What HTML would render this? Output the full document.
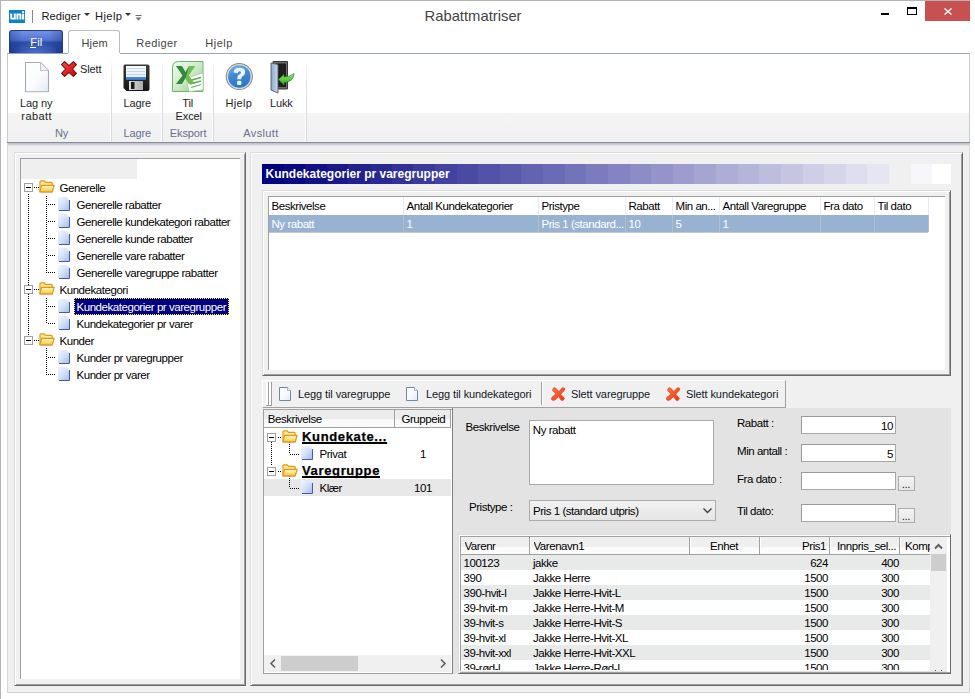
<!DOCTYPE html><html><head><meta charset="utf-8"><style>
*{margin:0;padding:0;box-sizing:border-box}
html,body{width:975px;height:699px;overflow:hidden;background:#fff;font-family:"Liberation Sans", sans-serif}
.a{position:absolute}
.t{position:absolute;white-space:nowrap;line-height:1;color:#000}
svg{position:absolute;overflow:visible}
</style></head><body>
<div class="a" style="left:0px;top:0px;width:970px;height:1px;background:#b5b5b5"></div>
<div class="a" style="left:0px;top:0px;width:1px;height:699px;background:#b5b5b5"></div>
<div class="a" style="left:9px;top:10px;width:16px;height:13px;background:#0a84c8"></div>
<svg style="left:9px;top:10px" width="16" height="13" viewBox="0 0 16 13"><g fill="#fff"><path d="M1.2 3.6h2v3.7q0 0.8 0.8 0.8t0.8-0.8V3.6h2v5.9H2.7Q1.2 9.5 1.2 8z"/><path d="M7.4 9.5V3.6h3.6q1.4 0 1.4 1.4v4.5h-2V5.8q0-0.5-0.5-0.5h-0.5v4.2z"/><rect x="13.1" y="3.6" width="2" height="5.9"/><rect x="13.1" y="1.2" width="2" height="1.7"/></g></svg>
<div class="a" style="left:32px;top:10px;width:1px;height:13px;background:#8a8a8a"></div>
<div class="t" style="left:41.5px;top:11px;font-size:11.2px;color:#1a1a1a">Rediger</div>
<svg style="left:84px;top:13px" width="6" height="3"><path d="M0 0h6L3 3z" fill="#333"/></svg>
<div class="t" style="left:95px;top:11px;font-size:11.2px;color:#1a1a1a;letter-spacing:0.4px">Hjelp</div>
<svg style="left:125px;top:13px" width="6" height="3"><path d="M0 0h6L3 3z" fill="#333"/></svg>
<svg style="left:135px;top:15px" width="7" height="6"><path d="M0.5 0.5h6" stroke="#6a6a6a" stroke-width="1"/><path d="M0.5 2.5h6L3.5 5.5z" fill="#6a6a6a"/></svg>
<div class="t" style="left:424.5px;top:9px;font-size:14.8px;color:#444">Rabattmatriser</div>
<div class="a" style="left:881px;top:13px;width:8px;height:2px;background:#000"></div>
<div class="a" style="left:907px;top:7px;width:10px;height:8px;border:1px solid #000;border-top-width:2px"></div>
<div class="a" style="left:925px;top:1px;width:45px;height:20px;background:#c75050"></div>
<svg style="left:944px;top:8px" width="8" height="7"><path d="M0.5 0.5L7.5 6.5M7.5 0.5L0.5 6.5" stroke="#fff" stroke-width="1.4"/></svg>
<div class="a" style="left:9px;top:30px;width:54px;height:24px;border-radius:3px 3px 0 0;background:radial-gradient(ellipse 45% 60% at 50% 100%,rgba(110,150,235,0.55),rgba(110,150,235,0) 100%),linear-gradient(to right,rgba(20,40,120,0.35),rgba(0,0,0,0) 25%,rgba(0,0,0,0) 75%,rgba(20,40,120,0.35)),linear-gradient(#7193e6,#5274d0 40%,#2b4ca6 50%,#25469e);border:1px solid #1f3a8a;border-bottom:none"></div>
<div class="t" style="left:30.3px;top:37px;font-size:11px;color:#fff;letter-spacing:0.2px">Fil</div>
<div class="a" style="left:30px;top:47px;width:6px;height:1px;background:#fff"></div>
<div class="a" style="left:68px;top:30px;width:52px;height:24px;border-radius:3px 3px 0 0;background:#fff;border:1px solid #b9bcc0;border-bottom:none"></div>
<div class="t" style="left:81.5px;top:38px;font-size:11px;letter-spacing:-0.1px;color:#1e1e1e;color:#444;letter-spacing:0.15px">Hjem</div>
<div class="t" style="left:136.3px;top:38px;font-size:11px;letter-spacing:-0.1px;color:#1e1e1e;color:#444;letter-spacing:0.4px">Rediger</div>
<div class="t" style="left:205.3px;top:38px;font-size:11px;letter-spacing:-0.1px;color:#1e1e1e;color:#444;letter-spacing:0.5px">Hjelp</div>
<div class="a" style="left:7px;top:53px;width:963px;height:90px;background:#fff;border:1px solid #c5cbd2;border-bottom:none;border-top-color:#9aa6b2"></div>
<div class="a" style="left:68px;top:53px;width:52px;height:1px;background:#fff"></div>
<div class="a" style="left:8px;top:113px;width:961px;height:29px;background:linear-gradient(#f4f4f4,#f0f0f0)"></div>
<div class="a" style="left:7px;top:142px;width:963px;height:1px;background:#878c96"></div>
<div class="a" style="left:7px;top:143px;width:963px;height:3px;background:linear-gradient(#b9bfc9,#cfd3da 60%,#eceef0)"></div>
<div class="a" style="left:111px;top:58px;width:1px;height:84px;background:linear-gradient(#fff,#dde1e5 30%,#d5d9dd)"></div>
<div class="a" style="left:110px;top:113px;width:1px;height:29px;background:#fff"></div>
<div class="a" style="left:162px;top:58px;width:1px;height:84px;background:linear-gradient(#fff,#dde1e5 30%,#d5d9dd)"></div>
<div class="a" style="left:161px;top:113px;width:1px;height:29px;background:#fff"></div>
<div class="a" style="left:213px;top:58px;width:1px;height:84px;background:linear-gradient(#fff,#dde1e5 30%,#d5d9dd)"></div>
<div class="a" style="left:212px;top:113px;width:1px;height:29px;background:#fff"></div>
<div class="a" style="left:306px;top:58px;width:1px;height:84px;background:linear-gradient(#fff,#dde1e5 30%,#d5d9dd)"></div>
<div class="a" style="left:305px;top:113px;width:1px;height:29px;background:#fff"></div>
<div class="t" style="left:20px;top:98px;font-size:11px;letter-spacing:-0.1px;color:#1e1e1e;">Lag ny</div>
<div class="t" style="left:21.3px;top:111px;font-size:11px;letter-spacing:-0.1px;color:#1e1e1e;letter-spacing:0.45px">rabatt</div>
<div class="t" style="left:80px;top:64px;font-size:11px;letter-spacing:-0.1px;color:#1e1e1e;">Slett</div>
<div class="t" style="left:123.5px;top:98px;font-size:11px;letter-spacing:-0.1px;color:#1e1e1e;">Lagre</div>
<div class="t" style="left:182.3px;top:98px;font-size:11px;letter-spacing:-0.1px;color:#1e1e1e;">Til</div>
<div class="t" style="left:175.5px;top:111px;font-size:11px;letter-spacing:-0.1px;color:#1e1e1e;">Excel</div>
<div class="t" style="left:225.4px;top:98px;font-size:11px;letter-spacing:-0.1px;color:#1e1e1e;letter-spacing:0.35px">Hjelp</div>
<div class="t" style="left:269.9px;top:98px;font-size:11px;letter-spacing:-0.1px;color:#1e1e1e;">Lukk</div>
<div class="t" style="left:55px;top:128px;font-size:11px;letter-spacing:-0.1px;color:#1e1e1e;color:#66708a;">Ny</div>
<div class="t" style="left:123.5px;top:128px;font-size:11px;letter-spacing:-0.1px;color:#1e1e1e;color:#66708a;">Lagre</div>
<div class="t" style="left:169.8px;top:128px;font-size:11px;letter-spacing:-0.1px;color:#1e1e1e;color:#66708a;">Eksport</div>
<div class="t" style="left:243.3px;top:128px;font-size:11px;letter-spacing:-0.1px;color:#1e1e1e;color:#66708a;letter-spacing:0.35px;">Avslutt</div>
<svg style="left:24px;top:61px" width="26" height="32" viewBox="0 0 26 32">
<defs><linearGradient id="dg" x1="0" y1="0" x2="1" y2="1"><stop offset="0" stop-color="#fff"/><stop offset="0.55" stop-color="#fafcfe"/><stop offset="1" stop-color="#e2eaf4"/></linearGradient></defs>
<path d="M1.5 1.5H16.5L24.5 9.5V30.5H1.5Z" fill="url(#dg)" stroke="#a4aab2" stroke-width="1.1"/>
<path d="M16.5 1.5V9.5H24.5Z" fill="#eef3f8" stroke="#b4bac0" stroke-width="0.8"/>
<path d="M2.5 30.8H24" stroke="#c8ccd0" stroke-width="0.8"/>
</svg>
<svg style="left:61px;top:61px" width="16" height="16" viewBox="0 0 16 16">
<defs><linearGradient id="xg" x1="0" y1="0" x2="1" y2="1"><stop offset="0" stop-color="#d86060"/><stop offset="0.45" stop-color="#e82828"/><stop offset="1" stop-color="#b80a0a"/></linearGradient></defs>
<path d="M0.6 3.6L3.6 0.6L8 4.6L12.4 0.6L15.4 3.6L11.4 8L15.4 12.4L12.4 15.4L8 11.4L3.6 15.4L0.6 12.4L4.6 8Z" fill="url(#xg)" stroke="#7a0a0a" stroke-width="1.1" stroke-linejoin="round"/>
</svg>
<svg style="left:123px;top:64px" width="27" height="28" viewBox="0 0 27 28">
<defs><linearGradient id="fb" x1="0" y1="0" x2="0" y2="1"><stop offset="0" stop-color="#3a3a3a"/><stop offset="1" stop-color="#151515"/></linearGradient>
<linearGradient id="fl" x1="0" y1="0" x2="0" y2="1"><stop offset="0" stop-color="#f8fbff"/><stop offset="0.75" stop-color="#e8f0fa"/><stop offset="0.8" stop-color="#4a90e0"/><stop offset="1" stop-color="#2a70c8"/></linearGradient>
<linearGradient id="fs" x1="0" y1="0" x2="1" y2="0"><stop offset="0" stop-color="#e0e0e0"/><stop offset="1" stop-color="#a8a8a8"/></linearGradient></defs>
<path d="M2 0.5H24.5Q26.5 0.5 26.5 2.5V25Q26.5 27 24.5 27H3.5L0.5 24V2Q0.5 0.5 2 0.5Z" fill="url(#fb)"/>
<rect x="3" y="2" width="20" height="14" fill="url(#fl)"/>
<path d="M4 4.5H22M4 7.5H22M4 10.5H22" stroke="#b8cfe8" stroke-width="0.8"/>
<rect x="6" y="17" width="14" height="9" fill="url(#fs)"/>
<rect x="8" y="18" width="3.5" height="7" fill="#1a1a1a"/>
</svg>
<svg style="left:172px;top:61px" width="32" height="31" viewBox="0 0 32 31">
<defs><linearGradient id="eg" x1="0" y1="0" x2="1" y2="1"><stop offset="0" stop-color="#f4fbf2"/><stop offset="0.5" stop-color="#cfe9c8"/><stop offset="1" stop-color="#8ccc84"/></linearGradient></defs>
<path d="M0.5 6.5Q0.5 0.5 6.5 0.5H31V30.5H0.5Z" fill="url(#eg)" stroke="#6ab86a"/>
<path d="M14 17L31 12V29L17 30.5Z" fill="#fff" stroke="#9ccc9c" stroke-width="0.8"/>
<path d="M18 19.5L29 16.5M18 23L29 20M19 26.5L29 23.5" stroke="#5cae5c" stroke-width="1.3"/>
<path d="M4 5H10L13.5 11L17 5H23L16.5 14.5L23 23H17L13.5 17L10 23H4L10.5 14.5Z" fill="#2e8b3e"/>
<path d="M17 5H23L16.5 14.5L23 23H17L13.5 17Z" fill="#7cc44c" opacity="0.85"/>
</svg>
<svg style="left:225px;top:62px" width="29" height="29" viewBox="0 0 29 29">
<defs><linearGradient id="hg" x1="0" y1="0" x2="0.3" y2="1"><stop offset="0" stop-color="#78b4e8"/><stop offset="0.5" stop-color="#3f8ad4"/><stop offset="1" stop-color="#2a78c8"/></linearGradient></defs>
<circle cx="14.3" cy="14.5" r="13.6" fill="#8a8a8a"/>
<circle cx="14.3" cy="14.5" r="12.6" fill="#d8d8d8"/>
<circle cx="14.3" cy="14.5" r="11.2" fill="url(#hg)"/>
<path d="M8.6 10.6Q8.6 5.8 14.4 5.8Q20.2 5.8 20.2 10.2Q20.2 12.8 17.4 14.3Q16.3 15 16.3 17.2H12.2Q12 13.8 14.6 12.3Q16 11.5 16 10.4Q16 9.2 14.4 9.2Q12.8 9.2 12.8 11.2Z" fill="#eef2f6"/>
<rect x="12.1" y="18.8" width="4.3" height="4.2" rx="1.3" fill="#eef2f6"/>
</svg>
<svg style="left:270px;top:61px" width="25" height="33" viewBox="0 0 25 33">
<defs><linearGradient id="dl" x1="0" y1="0" x2="1" y2="0"><stop offset="0" stop-color="#8aa8c8"/><stop offset="1" stop-color="#c8dcf0"/></linearGradient>
<linearGradient id="ga" x1="0" y1="0" x2="0" y2="1"><stop offset="0" stop-color="#8ee86a"/><stop offset="1" stop-color="#2fae22"/></linearGradient></defs>
<path d="M3 0.5H17.5V28H3Z" fill="#6a6a6a" stroke="#3a3a3a"/>
<path d="M6 2.5H16V26H6Z" fill="#1e1e1e"/>
<path d="M1 2L8 3.5V32L1 29Z" fill="url(#dl)" stroke="#505860" stroke-width="0.9"/>
<path d="M8.5 18.5L14 13.5V16Q20 16 24 12.5Q23.5 21 14 21.5V24Z" fill="url(#ga)" stroke="#2a8a1a" stroke-width="0.7"/>
</svg>
<div class="a" style="left:7px;top:146px;width:963px;height:546px;background:#f0f0f0"></div>
<div class="a" style="left:7px;top:143px;width:1px;height:550px;background:#d6d6d6"></div>
<div class="a" style="left:969px;top:143px;width:1px;height:550px;background:#d6d6d6"></div>
<div class="a" style="left:7px;top:692px;width:963px;height:1px;background:#d6d6d6"></div>
<div class="a" style="left:14px;top:152px;width:232px;height:534px;border-top:1px solid #dcdcdc;border-left:1px solid #dcdcdc;border-right:1px solid #696969;border-bottom:1px solid #696969;box-shadow:inset 1px 1px 0 #fff, inset -1px -1px 0 #a0a0a0"></div>
<div class="a" style="left:20px;top:158px;width:220px;height:521px;background:#fff;border-top:1px solid #a0a0a0;border-left:1px solid #a0a0a0"></div>
<div class="a" style="left:21px;top:159px;width:116px;height:20px;background:#efefef"></div>
<div class="a" style="left:28px;top:194px;width:1px;height:145px;background:repeating-linear-gradient(to bottom,#000 0 1px,transparent 1px 2px)"></div>
<div class="a" style="left:46px;top:196px;width:1px;height:77px;background:repeating-linear-gradient(to bottom,#000 0 1px,transparent 1px 2px)"></div>
<div class="a" style="left:46px;top:298px;width:1px;height:26px;background:repeating-linear-gradient(to bottom,#000 0 1px,transparent 1px 2px)"></div>
<div class="a" style="left:46px;top:348px;width:1px;height:27px;background:repeating-linear-gradient(to bottom,#000 0 1px,transparent 1px 2px)"></div>
<div class="a" style="left:34px;top:187px;width:5px;height:1px;background:repeating-linear-gradient(to right,#000 0 1px,transparent 1px 2px)"></div>
<div class="a" style="left:24px;top:183px;width:9px;height:9px;border:1px solid #a0a0a0;background:#fff"><div class="a" style="left:1px;top:3px;width:5px;height:1px;background:#000"></div></div>
<svg style="left:39px;top:180px" width="16" height="14" viewBox="0 0 16 14">
<defs><linearGradient id="fg0" x1="0" y1="0" x2="0" y2="1"><stop offset="0" stop-color="#fffbd0"/><stop offset="0.5" stop-color="#fbe27a"/><stop offset="1" stop-color="#f4c44a"/></linearGradient></defs>
<path d="M1.3 12.6H13.6" stroke="#9a9a9a" stroke-opacity="0.5"/>
<path d="M1 11.5V1.8Q1 0.8 2 0.8H5.2L6.6 2.3H12.2Q13.2 2.3 13.2 3.3V5.5" fill="#fde894" stroke="#e39a18" stroke-width="1.2"/>
<path d="M2.6 5.4H15.2L13.2 11.8H0.8Z" fill="url(#fg0)" stroke="#e3951a" stroke-width="1.2" stroke-linejoin="round"/>
</svg>
<div class="t" style="left:59.5px;top:183px;font-size:11.5px;letter-spacing:-0.45px;">Generelle</div>
<div class="a" style="left:48px;top:204px;width:8px;height:1px;background:repeating-linear-gradient(to right,#000 0 1px,transparent 1px 2px)"></div>
<svg style="left:58px;top:197px" width="12" height="14" viewBox="0 0 12 14">
<defs><linearGradient id="dc1" x1="0" y1="0" x2="1" y2="1"><stop offset="0" stop-color="#f2f6fe"/><stop offset="0.5" stop-color="#d4e2f8"/><stop offset="1" stop-color="#a6bcec"/></linearGradient></defs>
<path d="M0 0H8.5L11 2.5V13H0Z" fill="url(#dc1)"/>
<path d="M11.5 3V13.5H1" stroke="#4a5aa8" stroke-width="1" fill="none"/>
<path d="M8.5 0V2.5H11Z" fill="#e8eefa"/>
</svg>
<div class="t" style="left:76.5px;top:200px;font-size:11.5px;letter-spacing:-0.45px;">Generelle rabatter</div>
<div class="a" style="left:48px;top:221px;width:8px;height:1px;background:repeating-linear-gradient(to right,#000 0 1px,transparent 1px 2px)"></div>
<svg style="left:58px;top:214px" width="12" height="14" viewBox="0 0 12 14">
<defs><linearGradient id="dc2" x1="0" y1="0" x2="1" y2="1"><stop offset="0" stop-color="#f2f6fe"/><stop offset="0.5" stop-color="#d4e2f8"/><stop offset="1" stop-color="#a6bcec"/></linearGradient></defs>
<path d="M0 0H8.5L11 2.5V13H0Z" fill="url(#dc2)"/>
<path d="M11.5 3V13.5H1" stroke="#4a5aa8" stroke-width="1" fill="none"/>
<path d="M8.5 0V2.5H11Z" fill="#e8eefa"/>
</svg>
<div class="t" style="left:76.5px;top:217px;font-size:11.5px;letter-spacing:-0.45px;">Generelle kundekategori rabatter</div>
<div class="a" style="left:48px;top:238px;width:8px;height:1px;background:repeating-linear-gradient(to right,#000 0 1px,transparent 1px 2px)"></div>
<svg style="left:58px;top:231px" width="12" height="14" viewBox="0 0 12 14">
<defs><linearGradient id="dc3" x1="0" y1="0" x2="1" y2="1"><stop offset="0" stop-color="#f2f6fe"/><stop offset="0.5" stop-color="#d4e2f8"/><stop offset="1" stop-color="#a6bcec"/></linearGradient></defs>
<path d="M0 0H8.5L11 2.5V13H0Z" fill="url(#dc3)"/>
<path d="M11.5 3V13.5H1" stroke="#4a5aa8" stroke-width="1" fill="none"/>
<path d="M8.5 0V2.5H11Z" fill="#e8eefa"/>
</svg>
<div class="t" style="left:76.5px;top:234px;font-size:11.5px;letter-spacing:-0.45px;">Generelle kunde rabatter</div>
<div class="a" style="left:48px;top:255px;width:8px;height:1px;background:repeating-linear-gradient(to right,#000 0 1px,transparent 1px 2px)"></div>
<svg style="left:58px;top:248px" width="12" height="14" viewBox="0 0 12 14">
<defs><linearGradient id="dc4" x1="0" y1="0" x2="1" y2="1"><stop offset="0" stop-color="#f2f6fe"/><stop offset="0.5" stop-color="#d4e2f8"/><stop offset="1" stop-color="#a6bcec"/></linearGradient></defs>
<path d="M0 0H8.5L11 2.5V13H0Z" fill="url(#dc4)"/>
<path d="M11.5 3V13.5H1" stroke="#4a5aa8" stroke-width="1" fill="none"/>
<path d="M8.5 0V2.5H11Z" fill="#e8eefa"/>
</svg>
<div class="t" style="left:76.5px;top:251px;font-size:11.5px;letter-spacing:-0.45px;">Generelle vare rabatter</div>
<div class="a" style="left:48px;top:272px;width:8px;height:1px;background:repeating-linear-gradient(to right,#000 0 1px,transparent 1px 2px)"></div>
<svg style="left:58px;top:265px" width="12" height="14" viewBox="0 0 12 14">
<defs><linearGradient id="dc5" x1="0" y1="0" x2="1" y2="1"><stop offset="0" stop-color="#f2f6fe"/><stop offset="0.5" stop-color="#d4e2f8"/><stop offset="1" stop-color="#a6bcec"/></linearGradient></defs>
<path d="M0 0H8.5L11 2.5V13H0Z" fill="url(#dc5)"/>
<path d="M11.5 3V13.5H1" stroke="#4a5aa8" stroke-width="1" fill="none"/>
<path d="M8.5 0V2.5H11Z" fill="#e8eefa"/>
</svg>
<div class="t" style="left:76.5px;top:268px;font-size:11.5px;letter-spacing:-0.45px;">Generelle varegruppe rabatter</div>
<div class="a" style="left:34px;top:289px;width:5px;height:1px;background:repeating-linear-gradient(to right,#000 0 1px,transparent 1px 2px)"></div>
<div class="a" style="left:24px;top:285px;width:9px;height:9px;border:1px solid #a0a0a0;background:#fff"><div class="a" style="left:1px;top:3px;width:5px;height:1px;background:#000"></div></div>
<svg style="left:39px;top:282px" width="16" height="14" viewBox="0 0 16 14">
<defs><linearGradient id="fg6" x1="0" y1="0" x2="0" y2="1"><stop offset="0" stop-color="#fffbd0"/><stop offset="0.5" stop-color="#fbe27a"/><stop offset="1" stop-color="#f4c44a"/></linearGradient></defs>
<path d="M1.3 12.6H13.6" stroke="#9a9a9a" stroke-opacity="0.5"/>
<path d="M1 11.5V1.8Q1 0.8 2 0.8H5.2L6.6 2.3H12.2Q13.2 2.3 13.2 3.3V5.5" fill="#fde894" stroke="#e39a18" stroke-width="1.2"/>
<path d="M2.6 5.4H15.2L13.2 11.8H0.8Z" fill="url(#fg6)" stroke="#e3951a" stroke-width="1.2" stroke-linejoin="round"/>
</svg>
<div class="t" style="left:59.5px;top:285px;font-size:11.5px;letter-spacing:-0.45px;">Kundekategori</div>
<div class="a" style="left:48px;top:306px;width:8px;height:1px;background:repeating-linear-gradient(to right,#000 0 1px,transparent 1px 2px)"></div>
<svg style="left:58px;top:299px" width="12" height="14" viewBox="0 0 12 14">
<defs><linearGradient id="dc7" x1="0" y1="0" x2="1" y2="1"><stop offset="0" stop-color="#f2f6fe"/><stop offset="0.5" stop-color="#d4e2f8"/><stop offset="1" stop-color="#a6bcec"/></linearGradient></defs>
<path d="M0 0H8.5L11 2.5V13H0Z" fill="url(#dc7)"/>
<path d="M11.5 3V13.5H1" stroke="#4a5aa8" stroke-width="1" fill="none"/>
<path d="M8.5 0V2.5H11Z" fill="#e8eefa"/>
</svg>
<div class="a" style="left:74px;top:298px;width:155px;height:17px;background:#000080;outline:1px dotted #ff0;outline-offset:-1px"></div>
<div class="t" style="left:76.5px;top:302px;font-size:11.5px;letter-spacing:-0.45px;color:#fff">Kundekategorier pr varegrupper</div>
<div class="a" style="left:48px;top:323px;width:8px;height:1px;background:repeating-linear-gradient(to right,#000 0 1px,transparent 1px 2px)"></div>
<svg style="left:58px;top:316px" width="12" height="14" viewBox="0 0 12 14">
<defs><linearGradient id="dc8" x1="0" y1="0" x2="1" y2="1"><stop offset="0" stop-color="#f2f6fe"/><stop offset="0.5" stop-color="#d4e2f8"/><stop offset="1" stop-color="#a6bcec"/></linearGradient></defs>
<path d="M0 0H8.5L11 2.5V13H0Z" fill="url(#dc8)"/>
<path d="M11.5 3V13.5H1" stroke="#4a5aa8" stroke-width="1" fill="none"/>
<path d="M8.5 0V2.5H11Z" fill="#e8eefa"/>
</svg>
<div class="t" style="left:76.5px;top:319px;font-size:11.5px;letter-spacing:-0.45px;">Kundekategorier pr varer</div>
<div class="a" style="left:34px;top:340px;width:5px;height:1px;background:repeating-linear-gradient(to right,#000 0 1px,transparent 1px 2px)"></div>
<div class="a" style="left:24px;top:336px;width:9px;height:9px;border:1px solid #a0a0a0;background:#fff"><div class="a" style="left:1px;top:3px;width:5px;height:1px;background:#000"></div></div>
<svg style="left:39px;top:333px" width="16" height="14" viewBox="0 0 16 14">
<defs><linearGradient id="fg9" x1="0" y1="0" x2="0" y2="1"><stop offset="0" stop-color="#fffbd0"/><stop offset="0.5" stop-color="#fbe27a"/><stop offset="1" stop-color="#f4c44a"/></linearGradient></defs>
<path d="M1.3 12.6H13.6" stroke="#9a9a9a" stroke-opacity="0.5"/>
<path d="M1 11.5V1.8Q1 0.8 2 0.8H5.2L6.6 2.3H12.2Q13.2 2.3 13.2 3.3V5.5" fill="#fde894" stroke="#e39a18" stroke-width="1.2"/>
<path d="M2.6 5.4H15.2L13.2 11.8H0.8Z" fill="url(#fg9)" stroke="#e3951a" stroke-width="1.2" stroke-linejoin="round"/>
</svg>
<div class="t" style="left:59.5px;top:336px;font-size:11.5px;letter-spacing:-0.45px;">Kunder</div>
<div class="a" style="left:48px;top:357px;width:8px;height:1px;background:repeating-linear-gradient(to right,#000 0 1px,transparent 1px 2px)"></div>
<svg style="left:58px;top:350px" width="12" height="14" viewBox="0 0 12 14">
<defs><linearGradient id="dc10" x1="0" y1="0" x2="1" y2="1"><stop offset="0" stop-color="#f2f6fe"/><stop offset="0.5" stop-color="#d4e2f8"/><stop offset="1" stop-color="#a6bcec"/></linearGradient></defs>
<path d="M0 0H8.5L11 2.5V13H0Z" fill="url(#dc10)"/>
<path d="M11.5 3V13.5H1" stroke="#4a5aa8" stroke-width="1" fill="none"/>
<path d="M8.5 0V2.5H11Z" fill="#e8eefa"/>
</svg>
<div class="t" style="left:76.5px;top:353px;font-size:11.5px;letter-spacing:-0.45px;">Kunder pr varegrupper</div>
<div class="a" style="left:48px;top:374px;width:8px;height:1px;background:repeating-linear-gradient(to right,#000 0 1px,transparent 1px 2px)"></div>
<svg style="left:58px;top:367px" width="12" height="14" viewBox="0 0 12 14">
<defs><linearGradient id="dc11" x1="0" y1="0" x2="1" y2="1"><stop offset="0" stop-color="#f2f6fe"/><stop offset="0.5" stop-color="#d4e2f8"/><stop offset="1" stop-color="#a6bcec"/></linearGradient></defs>
<path d="M0 0H8.5L11 2.5V13H0Z" fill="url(#dc11)"/>
<path d="M11.5 3V13.5H1" stroke="#4a5aa8" stroke-width="1" fill="none"/>
<path d="M8.5 0V2.5H11Z" fill="#e8eefa"/>
</svg>
<div class="t" style="left:76.5px;top:370px;font-size:11.5px;letter-spacing:-0.45px;">Kunder pr varer</div>
<div class="a" style="left:250px;top:152px;width:713px;height:534px;border-top:1px solid #dcdcdc;border-left:1px solid #dcdcdc;border-right:1px solid #696969;border-bottom:1px solid #696969;box-shadow:inset 1px 1px 0 #fff, inset -1px -1px 0 #a0a0a0"></div>
<div class="a" style="left:262.0px;top:164px;width:22.22px;height:20px;background:rgb(0,0,128)"></div>
<div class="a" style="left:283.62px;top:164px;width:22.22px;height:20px;background:rgb(8,8,132)"></div>
<div class="a" style="left:305.24px;top:164px;width:22.22px;height:20px;background:rgb(16,16,136)"></div>
<div class="a" style="left:326.86px;top:164px;width:22.22px;height:20px;background:rgb(25,25,140)"></div>
<div class="a" style="left:348.48px;top:164px;width:22.22px;height:20px;background:rgb(33,33,144)"></div>
<div class="a" style="left:370.1px;top:164px;width:22.22px;height:20px;background:rgb(41,41,148)"></div>
<div class="a" style="left:391.72px;top:164px;width:22.22px;height:20px;background:rgb(49,49,153)"></div>
<div class="a" style="left:413.34px;top:164px;width:22.22px;height:20px;background:rgb(58,58,157)"></div>
<div class="a" style="left:434.96px;top:164px;width:22.22px;height:20px;background:rgb(66,66,161)"></div>
<div class="a" style="left:456.58px;top:164px;width:22.22px;height:20px;background:rgb(74,74,165)"></div>
<div class="a" style="left:478.2px;top:164px;width:22.22px;height:20px;background:rgb(82,82,169)"></div>
<div class="a" style="left:499.82px;top:164px;width:22.22px;height:20px;background:rgb(90,90,173)"></div>
<div class="a" style="left:521.44px;top:164px;width:22.22px;height:20px;background:rgb(99,99,177)"></div>
<div class="a" style="left:543.06px;top:164px;width:22.22px;height:20px;background:rgb(107,107,181)"></div>
<div class="a" style="left:564.68px;top:164px;width:22.22px;height:20px;background:rgb(115,115,185)"></div>
<div class="a" style="left:586.3px;top:164px;width:22.22px;height:20px;background:rgb(123,123,189)"></div>
<div class="a" style="left:607.92px;top:164px;width:22.22px;height:20px;background:rgb(132,132,194)"></div>
<div class="a" style="left:629.54px;top:164px;width:22.22px;height:20px;background:rgb(140,140,198)"></div>
<div class="a" style="left:651.16px;top:164px;width:22.22px;height:20px;background:rgb(148,148,202)"></div>
<div class="a" style="left:672.78px;top:164px;width:22.22px;height:20px;background:rgb(156,156,206)"></div>
<div class="a" style="left:694.4px;top:164px;width:22.22px;height:20px;background:rgb(165,165,210)"></div>
<div class="a" style="left:716.02px;top:164px;width:22.22px;height:20px;background:rgb(173,173,214)"></div>
<div class="a" style="left:737.64px;top:164px;width:22.22px;height:20px;background:rgb(181,181,218)"></div>
<div class="a" style="left:759.26px;top:164px;width:22.22px;height:20px;background:rgb(189,189,222)"></div>
<div class="a" style="left:780.88px;top:164px;width:22.22px;height:20px;background:rgb(197,197,226)"></div>
<div class="a" style="left:802.5px;top:164px;width:22.22px;height:20px;background:rgb(206,206,230)"></div>
<div class="a" style="left:824.12px;top:164px;width:22.22px;height:20px;background:rgb(214,214,235)"></div>
<div class="a" style="left:845.74px;top:164px;width:22.22px;height:20px;background:rgb(222,222,239)"></div>
<div class="a" style="left:867.36px;top:164px;width:22.22px;height:20px;background:rgb(230,230,243)"></div>
<div class="a" style="left:888.98px;top:164px;width:22.22px;height:20px;background:rgb(240,240,240)"></div>
<div class="a" style="left:910.6px;top:164px;width:22.22px;height:20px;background:rgb(247,247,251)"></div>
<div class="a" style="left:932.22px;top:164px;width:18.78px;height:20px;background:rgb(255,255,255)"></div>
<div class="t" style="left:265.5px;top:168px;font-size:12px;font-weight:bold;color:#fff">Kundekategorier pr varegrupper</div>
<div class="a" style="left:262px;top:190px;width:689px;height:186px;border-top:1px solid #dcdcdc;border-left:1px solid #dcdcdc;border-right:1px solid #696969;border-bottom:1px solid #696969;box-shadow:inset 1px 1px 0 #fff, inset -1px -1px 0 #a0a0a0"></div>
<div class="a" style="left:268px;top:196px;width:677px;height:174px;background:#fff;border-top:1px solid #a0a0a0;border-left:1px solid #a0a0a0"></div>
<div class="a" style="left:269px;top:215px;width:659px;height:17px;background:#98b2d1"></div>
<div class="a" style="left:269px;top:232px;width:659px;height:1px;background:#c4c6c8"></div>
<div class="t" style="left:271.5px;top:201px;font-size:11.5px;letter-spacing:-0.45px;">Beskrivelse</div>
<div class="t" style="left:271.5px;top:219px;font-size:11.5px;letter-spacing:-0.45px;color:#fff">Ny rabatt</div>
<div class="a" style="left:403px;top:197px;width:1px;height:18px;background:#e3edf9"></div>
<div class="a" style="left:403px;top:215px;width:1px;height:17px;background:#b8bec6"></div>
<div class="t" style="left:406.5px;top:201px;font-size:11.5px;letter-spacing:-0.45px;">Antall Kundekategorier</div>
<div class="t" style="left:406.5px;top:219px;font-size:11.5px;letter-spacing:-0.45px;color:#fff">1</div>
<div class="a" style="left:538px;top:197px;width:1px;height:18px;background:#e3edf9"></div>
<div class="a" style="left:538px;top:215px;width:1px;height:17px;background:#b8bec6"></div>
<div class="t" style="left:541.5px;top:201px;font-size:11.5px;letter-spacing:-0.45px;">Pristype</div>
<div class="t" style="left:541.5px;top:219px;font-size:11.5px;letter-spacing:-0.45px;color:#fff">Pris 1 (standard...</div>
<div class="a" style="left:625px;top:197px;width:1px;height:18px;background:#e3edf9"></div>
<div class="a" style="left:625px;top:215px;width:1px;height:17px;background:#b8bec6"></div>
<div class="t" style="left:628.5px;top:201px;font-size:11.5px;letter-spacing:-0.45px;">Rabatt</div>
<div class="t" style="left:628.5px;top:219px;font-size:11.5px;letter-spacing:-0.45px;color:#fff">10</div>
<div class="a" style="left:672px;top:197px;width:1px;height:18px;background:#e3edf9"></div>
<div class="a" style="left:672px;top:215px;width:1px;height:17px;background:#b8bec6"></div>
<div class="t" style="left:675.5px;top:201px;font-size:11.5px;letter-spacing:-0.45px;">Min an...</div>
<div class="t" style="left:675.5px;top:219px;font-size:11.5px;letter-spacing:-0.45px;color:#fff">5</div>
<div class="a" style="left:719px;top:197px;width:1px;height:18px;background:#e3edf9"></div>
<div class="a" style="left:719px;top:215px;width:1px;height:17px;background:#b8bec6"></div>
<div class="t" style="left:722.5px;top:201px;font-size:11.5px;letter-spacing:-0.45px;">Antall Varegruppe</div>
<div class="t" style="left:722.5px;top:219px;font-size:11.5px;letter-spacing:-0.45px;color:#fff">1</div>
<div class="a" style="left:820px;top:197px;width:1px;height:18px;background:#e3edf9"></div>
<div class="a" style="left:820px;top:215px;width:1px;height:17px;background:#b8bec6"></div>
<div class="t" style="left:823.5px;top:201px;font-size:11.5px;letter-spacing:-0.45px;">Fra dato</div>
<div class="a" style="left:874px;top:197px;width:1px;height:18px;background:#e3edf9"></div>
<div class="a" style="left:874px;top:215px;width:1px;height:17px;background:#b8bec6"></div>
<div class="t" style="left:877.5px;top:201px;font-size:11.5px;letter-spacing:-0.45px;">Til dato</div>
<div class="a" style="left:928px;top:197px;width:1px;height:18px;background:#e3edf9"></div>
<div class="a" style="left:928px;top:215px;width:1px;height:17px;background:#b8bec6"></div>
<div class="a" style="left:262px;top:380px;width:524px;height:28px;border-top:1px solid #fff;border-left:1px solid #fff;border-right:1px solid #a0a0a0;border-bottom:1px solid #a0a0a0;background:#f0f0f0"></div>
<div class="a" style="left:266px;top:382px;width:2px;height:23px;background:#fff"></div>
<div class="a" style="left:269px;top:382px;width:2px;height:23px;background:#fff"></div>
<div class="a" style="left:268px;top:382px;width:1px;height:24px;background:#a0a0a0"></div>
<div class="a" style="left:271px;top:382px;width:1px;height:24px;background:#a0a0a0"></div>
<div class="a" style="left:266px;top:405px;width:6px;height:1px;background:#a0a0a0"></div>
<svg style="left:279px;top:387px" width="13" height="15" viewBox="0 0 13 15">
<defs><linearGradient id="sdg279" x1="0" y1="0" x2="1" y2="1"><stop offset="0" stop-color="#ffffff"/><stop offset="0.55" stop-color="#f6f9fd"/><stop offset="1" stop-color="#dfe9f6"/></linearGradient></defs>
<path d="M0.5 0.5H8.5L11.5 3.5V13.5H0.5Z" fill="url(#sdg279)" stroke="#6f86ad" stroke-linejoin="round"/>
<path d="M8.5 0.5V3.5H11.5" fill="#fff" stroke="#8fa3c4" stroke-width="0.8"/>
</svg>
<div class="t" style="left:298px;top:389px;font-size:11px;letter-spacing:-0.1px;color:#1e1e1e;color:#101828;">Legg til varegruppe</div>
<svg style="left:406px;top:387px" width="13" height="15" viewBox="0 0 13 15">
<defs><linearGradient id="sdg406" x1="0" y1="0" x2="1" y2="1"><stop offset="0" stop-color="#ffffff"/><stop offset="0.55" stop-color="#f6f9fd"/><stop offset="1" stop-color="#dfe9f6"/></linearGradient></defs>
<path d="M0.5 0.5H8.5L11.5 3.5V13.5H0.5Z" fill="url(#sdg406)" stroke="#6f86ad" stroke-linejoin="round"/>
<path d="M8.5 0.5V3.5H11.5" fill="#fff" stroke="#8fa3c4" stroke-width="0.8"/>
</svg>
<div class="t" style="left:426px;top:389px;font-size:11px;letter-spacing:-0.1px;color:#1e1e1e;color:#101828;">Legg til kundekategori</div>
<div class="a" style="left:541px;top:382px;width:2px;height:23px;border-left:1px solid #a0a0a0;border-right:1px solid #fff"></div>
<svg style="left:551px;top:387px" width="15" height="14" viewBox="0 0 15 14">
<defs><linearGradient id="sxg551" x1="0" y1="0" x2="1" y2="1"><stop offset="0" stop-color="#ff7a40"/><stop offset="1" stop-color="#ea3a10"/></linearGradient></defs>
<path d="M2.2 1.4L4 0.6L8 4.6L11.6 0.6L13.8 1.5L13.4 3.2L9.6 7.3L13.4 11L12.4 13.2L10.4 13.4L7.5 9.6L4.6 12.6L2.2 13.5L0.6 12.6L0.7 10.6L5 6.8L1.6 3.6Z" fill="url(#sxg551)" stroke="#d83a14" stroke-width="0.7" stroke-linejoin="round"/>
</svg>
<div class="t" style="left:571px;top:389px;font-size:11px;letter-spacing:-0.1px;color:#1e1e1e;color:#101828;">Slett varegruppe</div>
<svg style="left:666px;top:387px" width="15" height="14" viewBox="0 0 15 14">
<defs><linearGradient id="sxg666" x1="0" y1="0" x2="1" y2="1"><stop offset="0" stop-color="#ff7a40"/><stop offset="1" stop-color="#ea3a10"/></linearGradient></defs>
<path d="M2.2 1.4L4 0.6L8 4.6L11.6 0.6L13.8 1.5L13.4 3.2L9.6 7.3L13.4 11L12.4 13.2L10.4 13.4L7.5 9.6L4.6 12.6L2.2 13.5L0.6 12.6L0.7 10.6L5 6.8L1.6 3.6Z" fill="url(#sxg666)" stroke="#d83a14" stroke-width="0.7" stroke-linejoin="round"/>
</svg>
<div class="t" style="left:686px;top:389px;font-size:11px;letter-spacing:-0.1px;color:#1e1e1e;color:#101828;">Slett kundekategori</div>
<div class="a" style="left:263px;top:409px;width:190px;height:265px;background:#fff;border:1px solid #a0a0a0;border-right:none"></div>
<div class="a" style="left:264px;top:410px;width:187px;height:18px;background:linear-gradient(#ececec 0,#ececec 55%,#fafafa 56%,#fafafa 100%);border-right:1px solid #a0a0a0;border-bottom:1px solid #a0a0a0"></div>
<div class="a" style="left:394px;top:410px;width:1px;height:17px;background:#a0a0a0"></div>
<div class="t" style="left:267.8px;top:414px;font-size:11.5px;letter-spacing:-0.45px;">Beskrivelse</div>
<div class="t" style="left:401.5px;top:414px;font-size:11.5px;letter-spacing:-0.45px;">Gruppeid</div>
<div class="a" style="left:264px;top:479px;width:187px;height:17px;background:#e8e8e8"></div>
<div class="a" style="left:271px;top:442px;width:1px;height:24px;background:repeating-linear-gradient(to bottom,#000 0 1px,transparent 1px 2px)"></div>
<div class="a" style="left:289px;top:442px;width:1px;height:12px;background:repeating-linear-gradient(to bottom,#000 0 1px,transparent 1px 2px)"></div>
<div class="a" style="left:289px;top:476px;width:1px;height:12px;background:repeating-linear-gradient(to bottom,#000 0 1px,transparent 1px 2px)"></div>
<div class="a" style="left:267px;top:433px;width:9px;height:9px;border:1px solid #a0a0a0;background:#fff"><div class="a" style="left:1px;top:3px;width:5px;height:1px;background:#000"></div></div>
<div class="a" style="left:278px;top:437px;width:4px;height:1px;background:repeating-linear-gradient(to right,#000 0 1px,transparent 1px 2px)"></div>
<svg style="left:282px;top:430px" width="16" height="14" viewBox="0 0 16 14">
<defs><linearGradient id="fg12" x1="0" y1="0" x2="0" y2="1"><stop offset="0" stop-color="#fffbd0"/><stop offset="0.5" stop-color="#fbe27a"/><stop offset="1" stop-color="#f4c44a"/></linearGradient></defs>
<path d="M1.3 12.6H13.6" stroke="#9a9a9a" stroke-opacity="0.5"/>
<path d="M1 11.5V1.8Q1 0.8 2 0.8H5.2L6.6 2.3H12.2Q13.2 2.3 13.2 3.3V5.5" fill="#fde894" stroke="#e39a18" stroke-width="1.2"/>
<path d="M2.6 5.4H15.2L13.2 11.8H0.8Z" fill="url(#fg12)" stroke="#e3951a" stroke-width="1.2" stroke-linejoin="round"/>
</svg>
<div class="t" style="left:302px;top:430px;font-size:13px;font-weight:bold;text-decoration:underline;text-decoration-thickness:1.5px;text-decoration-skip-ink:none;letter-spacing:0.65px;-webkit-text-stroke:0.25px #000">Kundekate...</div>
<div class="a" style="left:290px;top:454px;width:10px;height:1px;background:repeating-linear-gradient(to right,#000 0 1px,transparent 1px 2px)"></div>
<svg style="left:301px;top:446px" width="12" height="14" viewBox="0 0 12 14">
<defs><linearGradient id="dc13" x1="0" y1="0" x2="1" y2="1"><stop offset="0" stop-color="#f2f6fe"/><stop offset="0.5" stop-color="#d4e2f8"/><stop offset="1" stop-color="#a6bcec"/></linearGradient></defs>
<path d="M0 0H8.5L11 2.5V13H0Z" fill="url(#dc13)"/>
<path d="M11.5 3V13.5H1" stroke="#4a5aa8" stroke-width="1" fill="none"/>
<path d="M8.5 0V2.5H11Z" fill="#e8eefa"/>
</svg>
<div class="t" style="left:319.5px;top:449px;font-size:11.5px;letter-spacing:-0.45px;">Privat</div>
<div class="t" style="left:395px;top:449px;font-size:11.5px;width:56px;text-align:center;letter-spacing:-0.45px;">1</div>
<div class="a" style="left:267px;top:467px;width:9px;height:9px;border:1px solid #a0a0a0;background:#fff"><div class="a" style="left:1px;top:3px;width:5px;height:1px;background:#000"></div></div>
<div class="a" style="left:278px;top:471px;width:4px;height:1px;background:repeating-linear-gradient(to right,#000 0 1px,transparent 1px 2px)"></div>
<svg style="left:282px;top:464px" width="16" height="14" viewBox="0 0 16 14">
<defs><linearGradient id="fg14" x1="0" y1="0" x2="0" y2="1"><stop offset="0" stop-color="#fffbd0"/><stop offset="0.5" stop-color="#fbe27a"/><stop offset="1" stop-color="#f4c44a"/></linearGradient></defs>
<path d="M1.3 12.6H13.6" stroke="#9a9a9a" stroke-opacity="0.5"/>
<path d="M1 11.5V1.8Q1 0.8 2 0.8H5.2L6.6 2.3H12.2Q13.2 2.3 13.2 3.3V5.5" fill="#fde894" stroke="#e39a18" stroke-width="1.2"/>
<path d="M2.6 5.4H15.2L13.2 11.8H0.8Z" fill="url(#fg14)" stroke="#e3951a" stroke-width="1.2" stroke-linejoin="round"/>
</svg>
<div class="t" style="left:302px;top:464px;font-size:13px;font-weight:bold;text-decoration:underline;text-decoration-thickness:1.5px;text-decoration-skip-ink:none;letter-spacing:0.65px;-webkit-text-stroke:0.25px #000">Varegruppe</div>
<div class="a" style="left:290px;top:488px;width:10px;height:1px;background:repeating-linear-gradient(to right,#000 0 1px,transparent 1px 2px)"></div>
<svg style="left:301px;top:480px" width="12" height="14" viewBox="0 0 12 14">
<defs><linearGradient id="dc15" x1="0" y1="0" x2="1" y2="1"><stop offset="0" stop-color="#f2f6fe"/><stop offset="0.5" stop-color="#d4e2f8"/><stop offset="1" stop-color="#a6bcec"/></linearGradient></defs>
<path d="M0 0H8.5L11 2.5V13H0Z" fill="url(#dc15)"/>
<path d="M11.5 3V13.5H1" stroke="#4a5aa8" stroke-width="1" fill="none"/>
<path d="M8.5 0V2.5H11Z" fill="#e8eefa"/>
</svg>
<div class="t" style="left:319.5px;top:483px;font-size:11.5px;letter-spacing:-0.45px;">Klær</div>
<div class="t" style="left:395px;top:483px;font-size:11.5px;width:56px;text-align:center;letter-spacing:-0.45px;">101</div>
<div class="a" style="left:264px;top:655px;width:187px;height:17px;background:#f0f0f0"></div>
<div class="a" style="left:281px;top:656px;width:77px;height:15px;background:#cdcdcd"></div>
<svg style="left:270px;top:659px" width="6" height="9"><path d="M5 0.5L1 4.5L5 8.5" stroke="#606060" stroke-width="1.6" fill="none"/></svg>
<svg style="left:440px;top:659px" width="6" height="9"><path d="M1 0.5L5 4.5L1 8.5" stroke="#606060" stroke-width="1.6" fill="none"/></svg>
<div class="a" style="left:452px;top:408px;width:1px;height:266px;background:#808080"></div>
<div class="a" style="left:453px;top:408px;width:498px;height:266px;background:#e3e3e3"></div>
<div class="t" style="left:465.6px;top:422px;font-size:11.5px;letter-spacing:-0.45px;">Beskrivelse</div>
<div class="a" style="left:529px;top:420px;width:185px;height:65px;background:#fff;border:1px solid #a8a8a8"></div>
<div class="t" style="left:532.8px;top:425px;font-size:11.5px;letter-spacing:-0.45px;">Ny rabatt</div>
<div class="t" style="left:469px;top:502px;font-size:11.5px;letter-spacing:-0.45px;">Pristype :</div>
<div class="a" style="left:529px;top:500px;width:187px;height:21px;background:linear-gradient(#f2f2f2,#e5e5e5);border:1px solid #acacac"></div>
<div class="t" style="left:533px;top:506px;font-size:11.5px;letter-spacing:-0.45px;">Pris 1 (standard utpris)</div>
<svg style="left:703px;top:508px" width="9" height="6"><path d="M0.5 0.5L4.5 4.5L8.5 0.5" stroke="#404040" stroke-width="1.4" fill="none"/></svg>
<div class="t" style="left:737px;top:418px;font-size:11.5px;letter-spacing:-0.45px;">Rabatt :</div>
<div class="a" style="left:801px;top:416px;width:95px;height:18px;background:#fff;border:1px solid #a8a8a8;border-top-color:#9a9a9a;border-left-color:#9a9a9a"></div>
<div class="t" style="left:801px;top:421px;font-size:11.5px;width:92px;text-align:right;letter-spacing:-0.45px;">10</div>
<div class="t" style="left:737px;top:446px;font-size:11.5px;letter-spacing:-0.45px;">Min antall :</div>
<div class="a" style="left:801px;top:444px;width:95px;height:18px;background:#fff;border:1px solid #a8a8a8;border-top-color:#9a9a9a;border-left-color:#9a9a9a"></div>
<div class="t" style="left:801px;top:449px;font-size:11.5px;width:92px;text-align:right;letter-spacing:-0.45px;">5</div>
<div class="t" style="left:737px;top:474px;font-size:11.5px;letter-spacing:-0.45px;">Fra dato :</div>
<div class="a" style="left:801px;top:472px;width:95px;height:18px;background:#fff;border:1px solid #a8a8a8;border-top-color:#9a9a9a;border-left-color:#9a9a9a"></div>
<div class="a" style="left:898px;top:476px;width:17px;height:15px;background:linear-gradient(#f4f4f4,#e6e6e6);border:1px solid #acacac"></div>
<div class="t" style="left:902px;top:480px;font-size:10px;">...</div>
<div class="t" style="left:737px;top:506px;font-size:11.5px;letter-spacing:-0.45px;">Til dato:</div>
<div class="a" style="left:801px;top:504px;width:95px;height:18px;background:#fff;border:1px solid #a8a8a8;border-top-color:#9a9a9a;border-left-color:#9a9a9a"></div>
<div class="a" style="left:898px;top:508px;width:17px;height:15px;background:linear-gradient(#f4f4f4,#e6e6e6);border:1px solid #acacac"></div>
<div class="t" style="left:902px;top:512px;font-size:10px;">...</div>
<div class="a" style="left:458px;top:534px;width:493px;height:140px;border-top:1px solid #dcdcdc;border-left:1px solid #dcdcdc;border-right:1px solid #696969;border-bottom:1px solid #696969;box-shadow:inset 1px 1px 0 #fff, inset -1px -1px 0 #a0a0a0"></div>
<div class="a" style="left:460px;top:536px;width:490px;height:135px;background:#fff;border-top:1px solid #a0a0a0;border-left:1px solid #a0a0a0"></div>
<div class="a" style="left:461px;top:537px;width:469px;height:17px;background:linear-gradient(#efefef 0,#efefef 10px,#fbfbfb 10px)"></div>
<div class="a" style="left:461px;top:554px;width:470px;height:1px;background:#a0a0a0"></div>
<div class="t" style="left:464.5px;top:541px;font-size:11.5px;width:65px;letter-spacing:-0.45px;overflow:hidden;">Varenr</div>
<div class="a" style="left:529px;top:537px;width:1px;height:17px;background:#a0a0a0"></div>
<div class="a" style="left:530px;top:537px;width:1px;height:17px;background:#fff"></div>
<div class="t" style="left:533.5px;top:541px;font-size:11.5px;width:156px;letter-spacing:-0.45px;overflow:hidden;">Varenavn1</div>
<div class="a" style="left:689px;top:537px;width:1px;height:17px;background:#a0a0a0"></div>
<div class="a" style="left:690px;top:537px;width:1px;height:17px;background:#fff"></div>
<div class="t" style="left:689px;top:541px;font-size:11.5px;width:70px;text-align:center;letter-spacing:-0.45px;">Enhet</div>
<div class="a" style="left:759px;top:537px;width:1px;height:17px;background:#a0a0a0"></div>
<div class="a" style="left:760px;top:537px;width:1px;height:17px;background:#fff"></div>
<div class="t" style="left:759px;top:541px;font-size:11.5px;width:67px;text-align:right;letter-spacing:-0.45px;">Pris1</div>
<div class="a" style="left:829px;top:537px;width:1px;height:17px;background:#a0a0a0"></div>
<div class="a" style="left:830px;top:537px;width:1px;height:17px;background:#fff"></div>
<div class="t" style="left:829px;top:541px;font-size:11.5px;width:67px;text-align:right;letter-spacing:-0.45px;">Innpris_sel...</div>
<div class="a" style="left:899px;top:537px;width:1px;height:17px;background:#a0a0a0"></div>
<div class="a" style="left:900px;top:537px;width:1px;height:17px;background:#fff"></div>
<div class="t" style="left:905.0px;top:541px;font-size:11.5px;width:25.5px;letter-spacing:-0.45px;overflow:hidden;">Komp</div>
<div class="a" style="left:461px;top:537px;width:470px;height:133px;overflow:hidden"><div class="a" style="left:0px;top:18px;width:470px;height:15px;background:#e8e9e9"></div><div class="a" style="left:0px;top:48px;width:470px;height:15px;background:#e8e9e9"></div><div class="a" style="left:0px;top:78px;width:470px;height:15px;background:#e8e9e9"></div><div class="a" style="left:0px;top:108px;width:470px;height:15px;background:#e8e9e9"></div><div class="t" style="left:2.5px;top:21px;font-size:11.5px;letter-spacing:-0.45px;">100123</div><div class="t" style="left:72px;top:21px;font-size:11.5px;letter-spacing:-0.45px;">jakke</div><div class="t" style="left:298px;top:21px;font-size:11.5px;width:69px;text-align:right;letter-spacing:-0.45px;">624</div><div class="t" style="left:368px;top:21px;font-size:11.5px;width:70px;text-align:right;letter-spacing:-0.45px;">400</div><div class="t" style="left:2.5px;top:36px;font-size:11.5px;letter-spacing:-0.45px;">390</div><div class="t" style="left:72px;top:36px;font-size:11.5px;letter-spacing:-0.45px;">Jakke Herre</div><div class="t" style="left:298px;top:36px;font-size:11.5px;width:69px;text-align:right;letter-spacing:-0.45px;">1500</div><div class="t" style="left:368px;top:36px;font-size:11.5px;width:70px;text-align:right;letter-spacing:-0.45px;">300</div><div class="t" style="left:2.5px;top:51px;font-size:11.5px;letter-spacing:-0.45px;">390-hvit-l</div><div class="t" style="left:72px;top:51px;font-size:11.5px;letter-spacing:-0.45px;">Jakke Herre-Hvit-L</div><div class="t" style="left:298px;top:51px;font-size:11.5px;width:69px;text-align:right;letter-spacing:-0.45px;">1500</div><div class="t" style="left:368px;top:51px;font-size:11.5px;width:70px;text-align:right;letter-spacing:-0.45px;">300</div><div class="t" style="left:2.5px;top:66px;font-size:11.5px;letter-spacing:-0.45px;">39-hvit-m</div><div class="t" style="left:72px;top:66px;font-size:11.5px;letter-spacing:-0.45px;">Jakke Herre-Hvit-M</div><div class="t" style="left:298px;top:66px;font-size:11.5px;width:69px;text-align:right;letter-spacing:-0.45px;">1500</div><div class="t" style="left:368px;top:66px;font-size:11.5px;width:70px;text-align:right;letter-spacing:-0.45px;">300</div><div class="t" style="left:2.5px;top:81px;font-size:11.5px;letter-spacing:-0.45px;">39-hvit-s</div><div class="t" style="left:72px;top:81px;font-size:11.5px;letter-spacing:-0.45px;">Jakke Herre-Hvit-S</div><div class="t" style="left:298px;top:81px;font-size:11.5px;width:69px;text-align:right;letter-spacing:-0.45px;">1500</div><div class="t" style="left:368px;top:81px;font-size:11.5px;width:70px;text-align:right;letter-spacing:-0.45px;">300</div><div class="t" style="left:2.5px;top:96px;font-size:11.5px;letter-spacing:-0.45px;">39-hvit-xl</div><div class="t" style="left:72px;top:96px;font-size:11.5px;letter-spacing:-0.45px;">Jakke Herre-Hvit-XL</div><div class="t" style="left:298px;top:96px;font-size:11.5px;width:69px;text-align:right;letter-spacing:-0.45px;">1500</div><div class="t" style="left:368px;top:96px;font-size:11.5px;width:70px;text-align:right;letter-spacing:-0.45px;">300</div><div class="t" style="left:2.5px;top:111px;font-size:11.5px;letter-spacing:-0.45px;">39-hvit-xxl</div><div class="t" style="left:72px;top:111px;font-size:11.5px;letter-spacing:-0.45px;">Jakke Herre-Hvit-XXL</div><div class="t" style="left:298px;top:111px;font-size:11.5px;width:69px;text-align:right;letter-spacing:-0.45px;">1500</div><div class="t" style="left:368px;top:111px;font-size:11.5px;width:70px;text-align:right;letter-spacing:-0.45px;">300</div><div class="t" style="left:2.5px;top:126px;font-size:11.5px;letter-spacing:-0.45px;">39-rød-l</div><div class="t" style="left:72px;top:126px;font-size:11.5px;letter-spacing:-0.45px;">Jakke Herre-Rød-L</div><div class="t" style="left:298px;top:126px;font-size:11.5px;width:69px;text-align:right;letter-spacing:-0.45px;">1500</div><div class="t" style="left:368px;top:126px;font-size:11.5px;width:70px;text-align:right;letter-spacing:-0.45px;">300</div></div>
<div class="a" style="left:930px;top:537px;width:17px;height:134px;background:#f0f0f0"></div>
<div class="a" style="left:947px;top:537px;width:3px;height:135px;background:#fff"></div>
<div class="a" style="left:931px;top:554px;width:15px;height:17px;background:#cdcdcd"></div>
<svg style="left:934px;top:543px" width="9" height="7"><path d="M1 5.5L4.5 2L8 5.5" stroke="#606060" stroke-width="2" fill="none"/></svg>
<div class="a" style="left:935px;top:670px;width:1px;height:1px;background:#555"></div>
<div class="a" style="left:941px;top:670px;width:1px;height:1px;background:#555"></div>
</body></html>
